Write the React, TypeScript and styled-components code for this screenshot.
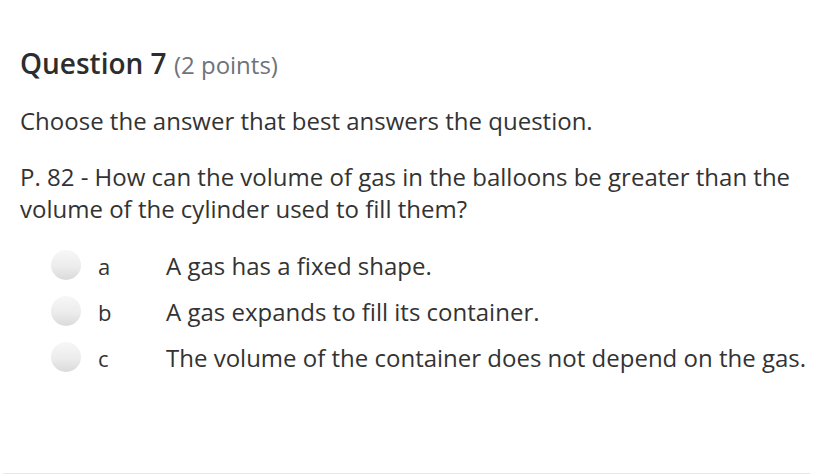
import React from "react";
import styled, { createGlobalStyle } from "styled-components";

const Global = createGlobalStyle`
  html, body { margin: 0; padding: 0; background: #fff; }
  body { font-family: "Open Sans", "Liberation Sans", sans-serif; color: #333; }
`;

const Page = styled.div`
  width: 828px;
  height: 474px;
  box-sizing: border-box;
  padding: 43px 0 0 20px;
  position: relative;
  overflow: hidden;
`;

const Heading = styled.h2`
  margin: 0;
  font-size: 28px;
  font-weight: 600;
  line-height: 40px;
  color: #2d2d2d;
`;

const Points = styled.span`
  font-size: 24px;
  font-weight: 400;
  color: #6f737a;
`;

const Para = styled.p<{ $mt: number }>`
  margin: ${(p) => p.$mt}px 0 0 0;
  font-size: 24px;
  line-height: 32px;
  color: #333;
  padding-right: 20px;
`;

const Options = styled.div`
  margin-top: 24px;
  display: flex;
  flex-direction: column;
  gap: 14px;
`;

const Option = styled.label`
  display: flex;
  align-items: center;
  height: 32px;
`;

const Radio = styled.span`
  width: 30px;
  height: 30px;
  border-radius: 50%;
  margin-left: 31px;
  background: linear-gradient(to bottom, #f7f7f7 0%, #ececec 55%, #dadada 100%);
  flex: none;
`;

const Letter = styled.span`
  width: 85px;
  padding-left: 17px;
  padding-top: 2px;
  box-sizing: border-box;
  font-size: 22px;
  color: #333;
  flex: none;
`;

const Answer = styled.span`
  font-size: 24px;
  color: #333;
`;

const Rule = styled.div`
  position: absolute;
  left: 3px;
  right: 18px;
  bottom: 0;
  height: 1px;
  background: #e8e8e8;
`;

const options = [
  ["a", "A gas has a fixed shape."],
  ["b", "A gas expands to fill its container."],
  ["c", "The volume of the container does not depend on the gas."],
];

export default function App() {
  return (
    <>
      <Global />
      <Page>
        <Heading>
          Question 7 <Points>(2 points)</Points>
        </Heading>
        <Para $mt={20}>Choose the answer that best answers the question.</Para>
        <Para $mt={24}>
          P. 82 - How can the volume of gas in the balloons be greater than the volume of the cylinder used to fill them?
        </Para>
        <Options>
          {options.map(([l, t]) => (
            <Option key={l}>
              <Radio />
              <Letter>{l}</Letter>
              <Answer>{t}</Answer>
            </Option>
          ))}
        </Options>
        <Rule />
      </Page>
    </>
  );
}
